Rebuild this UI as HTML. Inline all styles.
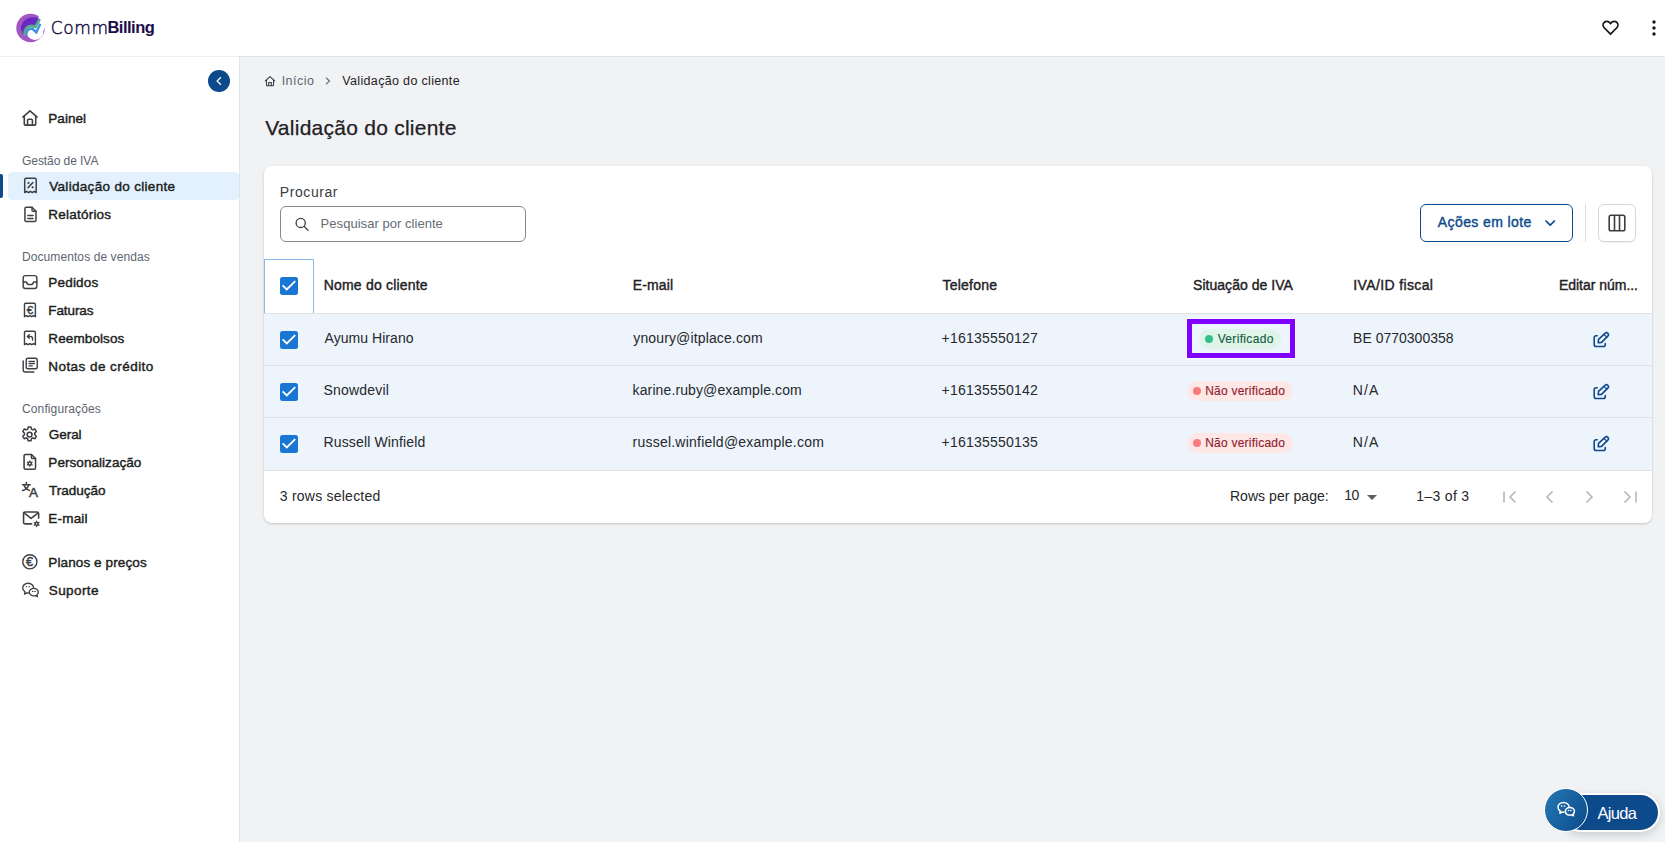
<!DOCTYPE html>
<html lang="pt">
<head>
<meta charset="utf-8">
<title>Validação do cliente</title>
<style>
*{box-sizing:border-box;margin:0;padding:0}
html,body{width:1665px;height:842px;overflow:hidden;background:#f1f2f4;font-family:"Liberation Sans",sans-serif;color:#1f2124}
.abs{position:absolute;white-space:nowrap;line-height:1}
#header{position:absolute;left:0;top:0;width:1665px;height:57px;background:#fff;border-bottom:1px solid #e1e3e5}
#side{position:absolute;left:0;top:57px;width:240px;height:785px;background:#fff;border-right:1px solid #e1e3e5}
.nav{position:absolute;font-size:13.5px;font-weight:normal;-webkit-text-stroke:.42px #1c1e21;color:#1c1e21;white-space:nowrap;line-height:16px}
.sec{position:absolute;font-size:12px;color:#5d6470;white-space:nowrap;line-height:14px}
.ico{position:absolute;left:21px;width:18px;height:18px;fill:none;stroke:#3c3f44;stroke-width:1.42;stroke-linecap:round;stroke-linejoin:round}
#card{position:absolute;left:264px;top:166px;width:1388px;height:357px;background:#fff;border-radius:8px;box-shadow:0 1px 3px rgba(0,0,0,.12),0 1px 2px rgba(0,0,0,.08)}
.row{position:absolute;left:0;width:1388px;background:#edf4fc;border-top:1px solid #dfe1e4}
.th{position:absolute;top:111.2px;font-size:14px;-webkit-text-stroke:.4px #1f2124;color:#1f2124;white-space:nowrap;line-height:16px}
.td{position:absolute;font-size:14px;color:#26282b;white-space:nowrap;line-height:16px;letter-spacing:.15px}
.cb{position:absolute;left:16px;width:18px;height:18px;background:#1976d2;border-radius:2.5px}
.cb svg{position:absolute;left:0;top:0;width:18px;height:18px;fill:none;stroke:#fff;stroke-width:1.9}
.chip{position:absolute;height:20px;border-radius:10px;font-size:12px;line-height:20px;white-space:nowrap}
.chip i{position:absolute;top:6px;width:8px;height:8px;border-radius:50%}
.edit{position:absolute;left:1328px;width:18px;height:18px;fill:none;stroke:#0d4a8b;stroke-width:1.6;stroke-linecap:round;stroke-linejoin:round}
.pg{position:absolute;top:321px;width:20px;height:20px;fill:none;stroke:#b4b7bb;stroke-width:1.6}
</style>
</head>
<body>
<div id="header">
  <svg class="abs" style="left:10px;top:8px" width="42" height="40" viewBox="0 0 42 40">
    <circle cx="20.500" cy="20" r="14.200" fill="#a256c2"/>
    <circle cx="24.900" cy="23.500" r="8.500" fill="#fff"/>
    <path d="M28.900 8.200L40 2V19.400H34.900L33.300 23 25 23.500 26 14z" fill="#fff"/>
    <path d="M28 9.500Q15 7.500 11.200 17.500 10 22.500 13.800 26.500L14.500 21.500Q16 17.300 22 17L24.800 17.600 28.800 11z" fill="#6a28c2"/>
    <path d="M16.300 27.600Q15.800 20.800 22.300 20.600L26.300 24.400 30.300 15.800" fill="none" stroke="#3d93dc" stroke-width="2.500" stroke-linejoin="miter"/>
    <path d="M14.700 26.600Q13.900 18.400 22 17.900L25.400 18.900 29.300 11.900" fill="none" stroke="#56a88c" stroke-width="2.700" stroke-linejoin="miter" stroke-linecap="round"/>
  </svg>
  <div class="abs" id="logo1" style="left:50.8px;top:19.6px;font-size:17px;color:#1b1145;-webkit-text-stroke:.45px #1b1145;font-family:'DejaVu Sans Light','DejaVu Sans','Liberation Sans',sans-serif;font-weight:200;letter-spacing:0.6px">Comm</div>
  <div class="abs" id="logo2" style="left:107.38px;top:19.3px;font-size:16.500px;color:#1a0d4a;font-weight:bold;letter-spacing:-0.493px">Billing</div>
  <svg class="abs" style="left:1600.5px;top:18.4px" width="19" height="19" viewBox="0 0 24 24" fill="none" stroke="#17181a" stroke-width="2.2" stroke-linejoin="round"><path d="M12 20.500l-8-8.200a4.800 4.800 0 0 1 0-6.700 4.600 4.600 0 0 1 6.600 0L12 7l1.400-1.400a4.600 4.600 0 0 1 6.600 0 4.800 4.800 0 0 1 0 6.700z"/></svg>
  <svg class="abs" style="left:1651px;top:19px" width="6" height="18" viewBox="0 0 6 18" fill="#17181a"><circle cx="3" cy="3" r="1.700"/><circle cx="3" cy="9" r="1.700"/><circle cx="3" cy="15" r="1.700"/></svg>
</div>

<div id="side"></div>
<div class="abs" style="left:0;top:56px;width:239px;height:1px;background:#eeeff1"></div>
<div id="sidecontent">
  <div class="abs" style="left:208px;top:70px;width:22px;height:22px;border-radius:50%;background:#0d4a8b"></div>
  <svg class="abs" style="left:214.4px;top:75px" width="10" height="12" viewBox="0 0 10 12" fill="none" stroke="#fff" stroke-width="1.250"><path d="M6.900 2.200L3.100 6l3.800 3.800"/></svg>

  <div class="abs" style="left:0;top:174px;width:3px;height:24px;background:#0d4a8b;border-radius:0 2px 2px 0"></div>
  <div class="abs" style="left:8px;top:172px;width:231px;height:28px;background:#e2f1fd;border-radius:4px"></div>

  <svg class="ico" style="left:19.12px;top:107.08px;width:21.97px;height:21.97px" viewBox="0 0 20 20"><path d="M3.500 9.200L10 3.500l6.500 5.700"/><path d="M4.800 8.300v7.200q0 1 1 1h8.400q1 0 1-1V8.300"/><path d="M7.800 16.300v-4.200q0-1 1-1h2.400q1 0 1 1v4.200"/></svg>
  <div class="nav" id="n1" style="left:48.33px;top:110.6px;letter-spacing:0.037px">Painel</div>
  <svg class="ico" style="left:19.57px;top:175.44px;width:20.92px;height:20.92px" viewBox="0 0 20 20"><path d="M4.500 16.800V4.500q0-1.300 1.300-1.300h8.400q1.300 0 1.300 1.300v12.300l-1.830-1.200-1.830 1.200-1.840-1.200-1.830 1.200-1.830-1.200L4.500 16.800z"/><path d="M12.300 7.200l-4.600 5"/><circle cx="8" cy="7.600" r=".7" fill="#3a3d42" stroke-width=".6"/><circle cx="12" cy="11.800" r=".7" fill="#3a3d42" stroke-width=".6"/></svg>
  <div class="nav" id="n2" style="left:49.18px;top:178.6px;letter-spacing:0.321px">Validação do cliente</div>
  <svg class="ico" style="left:19.57px;top:203.94px;width:20.92px;height:20.92px" viewBox="0 0 20 20"><path d="M11.500 3.200H6q-1.300 0-1.300 1.300v11q0 1.300 1.300 1.300h8q1.300 0 1.300-1.300V7z"/><path d="M11.500 3.200V6q0 1 1 1h2.800"/><path d="M7.500 11h5M7.500 13.800h5"/></svg>
  <div class="nav" id="n3" style="left:48.33px;top:206.6px;letter-spacing:0.221px">Relatórios</div>
  <svg class="ico" style="left:19.96px;top:271.86px;width:20.07px;height:20.07px" viewBox="0 0 20 20"><rect x="3.200" y="3.600" width="13.600" height="12.800" rx="2.200"/><path d="M3.200 10h3.300q.5 2.600 3.500 2.600t3.500-2.600h3.300"/></svg>
  <div class="nav" id="n4" style="left:48.33px;top:274.6px;letter-spacing:0.191px">Pedidos</div>
  <svg class="ico" style="left:20.26px;top:299.56px;width:19.88px;height:19.88px" viewBox="0 0 20 20"><path d="M4.500 16.800V4.500q0-1.300 1.300-1.300h8.400q1.300 0 1.300 1.300v12.300l-1.830-1.200-1.830 1.200-1.840-1.200-1.830 1.200-1.830-1.200L4.500 16.800z"/><text x="10.100" y="13.900" font-size="11.500" text-anchor="middle" fill="#3a3d42" stroke="#3a3d42" stroke-width=".45" font-family="Liberation Sans,sans-serif">€</text></svg>
  <div class="nav" id="n5" style="left:48.33px;top:302.6px;letter-spacing:-0.106px">Faturas</div>
  <svg class="ico" style="left:20.26px;top:327.56px;width:19.88px;height:19.88px" viewBox="0 0 20 20"><path d="M4.500 16.800V4.500q0-1.300 1.300-1.300h8.400q1.300 0 1.300 1.300v12.300l-1.830-1.200-1.830 1.200-1.840-1.200-1.830 1.200-1.830-1.200L4.500 16.800z"/><path d="M7.600 8.600h3q2 0 2 2v1.600" stroke-width="1.400"/><path d="M9.300 6.800L7.500 8.600l1.800 1.800" stroke-width="1.400"/></svg>
  <div class="nav" id="n6" style="left:48.33px;top:330.6px;letter-spacing:0.106px">Reembolsos</div>
  <svg class="ico" style="left:19.51px;top:354.83px;width:20.06px;height:20.06px" viewBox="0 0 20 20"><rect x="6.200" y="3.200" width="11" height="10.600" rx="1.800"/><path d="M3.200 6v9q0 2 2 2h8.600"/><path d="M9 6.500h5.400M9 8.700h5.400M9 10.900h3.200" stroke-width="1.300"/></svg>
  <div class="nav" id="n7" style="left:48.28px;top:358.6px;letter-spacing:0.449px">Notas de crédito</div>
  <svg class="ico" style="left:19.46px;top:424.33px;width:21.17px;height:21.17px" viewBox="0 0 20 20"><circle cx="10" cy="10" r="2.300"/><path d="M8.700 2.800h2.600l.5 2 1.300.7 2-.7 1.300 2.300-1.500 1.500v1.500l1.500 1.500-1.300 2.300-2-.7-1.300.7-.5 2H8.700l-.5-2-1.300-.7-2 .7-1.300-2.300 1.500-1.500V8.600L3.600 7.100l1.300-2.300 2 .7 1.300-.7z"/></svg>
  <div class="nav" id="n8" style="left:48.83px;top:426.6px;letter-spacing:-0.055px">Geral</div>
  <svg class="ico" style="left:19.29px;top:451.08px;width:21.63px;height:21.63px" viewBox="0 0 20 20"><path d="M11.500 3.200H6q-1.300 0-1.300 1.300v11q0 1.300 1.300 1.300h8q1.300 0 1.300-1.300V7z"/><path d="M11.500 3.200V6q0 1 1 1h2.800"/><circle cx="10" cy="11.600" r="1.500" stroke-width="1.300"/><path d="M10 9.200v.9M10 13.100v.9M7.900 10.400l.8.500M11.300 12.300l.8.500M7.900 12.800l.8-.5M11.300 10.900l.8-.5" stroke-width="1.200"/></svg>
  <div class="nav" id="n9" style="left:48.33px;top:454.6px;letter-spacing:0.057px">Personalização</div>
  <svg class="ico" style="left:19.22px;top:479.16px;width:21.66px;height:21.66px" viewBox="0 0 20 20"><path d="M3.300 5.400h7M6.800 3.300v2.100M4.700 5.400q.6 3.400 4.900 5.100M8.900 5.400q-.8 3.800-5.500 5.300" stroke-width="1.400"/><text x="13.500" y="16.900" font-size="12.500" text-anchor="middle" fill="#3a3d42" stroke="#3a3d42" stroke-width=".45" font-family="Liberation Sans,sans-serif">A</text></svg>
  <div class="nav" id="n10" style="left:49.1px;top:482.6px;letter-spacing:-0.022px">Tradução</div>
  <svg class="ico" style="left:19.55px;top:506.89px;width:22.21px;height:22.21px" viewBox="0 0 20 20"><path d="M10.500 15.200H4.700q-1.500 0-1.500-1.500V6q0-1.500 1.500-1.500h10.600q1.500 0 1.500 1.500v4"/><path d="M3.600 5.200L10 10.200l6.400-5"/><circle cx="15" cy="15.200" r="1.300" stroke-width="1.200"/><path d="M15 12.800v1M15 16.600v1M12.900 14l.9.500M16.200 15.900l.9.500M12.900 16.400l.9-.5M16.200 14.500l.9-.5" stroke-width="1.200"/></svg>
  <div class="nav" id="n11" style="left:48.33px;top:510.6px;letter-spacing:0.19px">E-mail</div>
  <svg class="ico" style="left:20.21px;top:551.99px;width:19.68px;height:19.68px" viewBox="0 0 20 20"><circle cx="10" cy="10" r="7.200"/><text x="9.800" y="14.600" font-size="13" text-anchor="middle" fill="#3a3d42" stroke="#3a3d42" stroke-width=".45" font-family="Liberation Sans,sans-serif">€</text></svg>
  <div class="nav" id="n12" style="left:48.33px;top:554.6px;letter-spacing:0.107px">Planos e preços</div>
  <svg class="ico" style="left:19.89px;top:579.46px;width:20.83px;height:20.83px" viewBox="0 0 20 20"><path d="M8.200 13.400q-.7.100-1.600-.1l-2.300 1.200.5-2.100Q2.600 11 2.600 8.700q0-2 1.500-3.300t3.700-1.300q2.200 0 3.700 1.300 1.300 1.100 1.500 2.700" stroke-width="1.300"/><path d="M17.600 12.600q0 1.600-1.300 2.600l.4 1.700-1.900-.9q-.8.200-1.500.2-1.800 0-3.100-1t-1.300-2.600 1.300-2.600 3.100-1 3.100 1 1.200 2.600z" stroke-width="1.300"/><path d="M6.200 7.300h.2M8.800 7.300h.2M12.100 11.900h.2M14.300 11.900h.2" stroke-width="1.300"/></svg>
  <div class="nav" id="n13" style="left:48.76px;top:582.6px;letter-spacing:0.42px">Suporte</div>
  <div class="sec" id="s1" style="left:22.02px;top:154.0px;letter-spacing:-0.062px">Gestão de IVA</div>
  <div class="sec" id="s2" style="left:21.98px;top:250.0px;letter-spacing:0.088px">Documentos de vendas</div>
  <div class="sec" id="s3" style="left:22.02px;top:402.2px;letter-spacing:0.119px">Configurações</div>
</div>

<div id="main">
  <svg class="abs" style="left:264px;top:75px" width="12" height="12" viewBox="0 0 12 12" fill="none" stroke="#3a3d42" stroke-width="1.100" stroke-linejoin="round" stroke-linecap="round"><path d="M1.300 5.800L6 1.600l4.700 4.200"/><path d="M2.500 5v5.200q0 .5.500.5h6q.5 0 .5-.5V5"/><path d="M4.700 10.600V7.500h2.600v3.100"/></svg>
  <svg class="abs" style="left:324px;top:76px" width="8" height="10" viewBox="0 0 8 10" fill="none" stroke="#6b7078" stroke-width="1.200"><path d="M2 1.800L5.500 5 2 8.200"/></svg>
  <div class="abs" id="bc1" style="left:281.66px;top:75.2px;font-size:12.5px;color:#5d6470;letter-spacing:0.466px">Início</div>
  <div class="abs" id="bc2" style="left:342.34px;top:75.2px;font-size:12.5px;color:#1f2124;letter-spacing:0.334px">Validação do cliente</div>
  <div class="abs" id="title" style="left:265.18px;top:116.6px;font-size:21px;color:#1f2124;-webkit-text-stroke:.25px #1f2124;letter-spacing:0.253px">Validação do cliente</div>
</div>

<div id="card">
  <div class="abs" id="proc" style="left:15.8px;top:19px;font-size:14px;color:#3a3d42;letter-spacing:0.575px">Procurar</div>
  <div class="abs" style="left:16px;top:40px;width:246px;height:36px;border:1px solid #85888c;border-radius:6px"></div>
  <div class="abs" id="ph" style="left:56.61px;top:51px;font-size:13px;color:#666b73;letter-spacing:0.04px">Pesquisar por cliente</div>

  <div class="abs" style="left:1156px;top:38px;width:153px;height:38px;border:1px solid #0d4a8b;border-radius:6px"></div>
  <div class="abs" id="acoes" style="left:1173.86px;top:49px;font-size:14px;-webkit-text-stroke:.4px #0d4a8b;color:#0d4a8b;letter-spacing:0.391px">Ações em lote</div>
  <div class="abs" style="left:1321px;top:38px;width:1px;height:38px;background:#dcdee1"></div>
  <div class="abs" style="left:1334px;top:38px;width:38px;height:38px;border:1px solid #d5d7da;border-radius:6px;box-shadow:0 1px 0 rgba(0,0,0,.06)"></div>

  <div class="abs" style="left:0;top:93px;width:50px;height:54px;border:1px solid #8db9ea;border-bottom:none"></div>

  <div class="th" id="h1" style="left:59.73px;letter-spacing:0.198px">Nome do cliente</div>
  <div class="th" id="h2" style="left:368.67px;letter-spacing:0.152px">E-mail</div>
  <div class="th" id="h3" style="left:678.59px;letter-spacing:0.208px">Telefone</div>
  <div class="th" id="h4" style="left:929.0px;letter-spacing:0.042px">Situação de IVA</div>
  <div class="th" id="h5" style="left:1089.26px;letter-spacing:0.372px">IVA/ID fiscal</div>
  <div class="th" id="h6" style="left:1294.96px;letter-spacing:-0.027px">Editar núm...</div>

  <div class="row" style="top:147px;height:52px"></div>
  <div class="row" style="top:199px;height:52px"></div>
  <div class="row" style="top:251px;height:54px;border-bottom:1px solid #dfe1e4"></div>

  <div class="td" id="a1" style="left:60.5px;top:164px;letter-spacing:0.052px">Ayumu Hirano</div>
  <div class="td" id="a2" style="left:369.3px;top:164px;letter-spacing:0.133px">ynoury@itplace.com</div>
  <div class="td" id="a3" style="left:677.59px;top:164px;letter-spacing:0.209px">+16135550127</div>
  <div class="td" id="a5" style="left:1089.04px;top:164px;letter-spacing:0.011px">BE 0770300358</div>

  <div class="td" id="b1" style="left:59.6px;top:216px;letter-spacing:0.189px">Snowdevil</div>
  <div class="td" id="b2" style="left:368.62px;top:216px;letter-spacing:0.11px">karine.ruby@example.com</div>
  <div class="td" id="b3" style="left:677.59px;top:216px;letter-spacing:0.209px">+16135550142</div>
  <div class="td" id="b5" style="left:1088.85px;top:216px;letter-spacing:1.123px">N/A</div>

  <div class="td" id="c1" style="left:59.51px;top:268px;letter-spacing:0.148px">Russell Winfield</div>
  <div class="td" id="c2" style="left:368.53px;top:268px;letter-spacing:0.23px">russel.winfield@example.com</div>
  <div class="td" id="c3" style="left:677.59px;top:268px;letter-spacing:0.206px">+16135550135</div>
  <div class="td" id="c5" style="left:1088.85px;top:268px;letter-spacing:1.123px">N/A</div>

  <div class="abs" id="sel" style="left:15.82px;top:323px;font-size:14px;color:#26282b;letter-spacing:0.229px">3 rows selected</div>
  <div class="abs" id="rpp" style="left:965.88px;top:323px;font-size:14px;color:#26282b;letter-spacing:0.061px">Rows per page:</div>
  <div class="abs" id="ten" style="left:1080.34px;top:322px;font-size:14px;color:#26282b;letter-spacing:-0.494px">10</div>
  <div class="abs" id="of" style="left:1152.36px;top:323px;font-size:14px;color:#26282b;letter-spacing:0.302px">1–3 of 3</div>

  <svg class="abs" style="left:30px;top:50px" width="16" height="16" viewBox="0 0 16 16" fill="none" stroke="#3a3d42" stroke-width="1.300" stroke-linecap="round"><circle cx="6.700" cy="6.900" r="4.600"/><path d="M10.200 10.400L14 14.200"/></svg>
  <svg class="abs" style="left:1279px;top:52px" width="14" height="10" viewBox="0 0 14 10" fill="none" stroke="#0d4a8b" stroke-width="1.700" stroke-linecap="round" stroke-linejoin="round"><path d="M3 3l4.200 4.200L11.400 3"/></svg>
  <svg class="abs" style="left:1343px;top:47px" width="20" height="20" viewBox="0 0 20 20" fill="none" stroke="#3a3d42" stroke-width="1.600" stroke-linejoin="round"><rect x="2.200" y="2.200" width="15.600" height="15.600" rx="1.800"/><path d="M7.500 2.200v15.600M12.500 2.200v15.600"/></svg>

  <div class="cb" style="top:111px"><svg viewBox="0 0 18 18"><path d="M2.600 8.300l4.200 4.200 8.400-8.400"/></svg></div>
  <div class="cb" style="top:165px"><svg viewBox="0 0 18 18"><path d="M2.600 8.300l4.200 4.200 8.400-8.400"/></svg></div>
  <div class="cb" style="top:217px"><svg viewBox="0 0 18 18"><path d="M2.600 8.300l4.200 4.200 8.400-8.400"/></svg></div>
  <div class="cb" style="top:269px"><svg viewBox="0 0 18 18"><path d="M2.600 8.300l4.200 4.200 8.400-8.400"/></svg></div>

  <div class="abs" style="left:923px;top:153px;width:108px;height:39px;border:5px solid #8000ff;box-shadow:0 0 0 1px rgba(255,255,255,.7)"></div>
  <div class="chip" style="left:935px;top:163px;width:82px;background:#dff5ea"><i style="left:6px;background:#34c08a"></i></div>
  <div class="abs" id="k1" style="left:953.64px;top:167px;font-size:12px;color:#155c44;-webkit-text-stroke:.15px #155c44;letter-spacing:0.338px">Verificado</div>
  <div class="chip" style="left:923px;top:215px;width:106px;background:#fde8e6"><i style="left:6px;background:#f87a7e"></i></div>
  <div class="abs" id="k2" style="left:941.18px;top:219px;font-size:12px;color:#941c30;-webkit-text-stroke:.15px #941c30;letter-spacing:0.23px">Não verificado</div>
  <div class="chip" style="left:923px;top:267px;width:106px;background:#fde8e6"><i style="left:6px;background:#f87a7e"></i></div>
  <div class="abs" id="k3" style="left:941.18px;top:271px;font-size:12px;color:#941c30;-webkit-text-stroke:.15px #941c30;letter-spacing:0.23px">Não verificado</div>

  <svg class="edit" style="top:165px" viewBox="0 0 18 18"><path d="M5.200 4.800H4.200Q2.200 4.800 2.200 6.800v6.600q0 2.100 2.100 2.100h6.900q2.100 0 2.100-2.100v-.8"/><path d="M13 2.300A1.950 1.950 0 0 1 15.800 5.100L9.500 11.400l-3.300.3.300-3.300z"/><path d="M12 3.400l2.700 2.700" stroke-width="1.300"/></svg>
  <svg class="edit" style="top:217px" viewBox="0 0 18 18"><path d="M5.200 4.800H4.200Q2.200 4.800 2.200 6.800v6.600q0 2.100 2.100 2.100h6.900q2.100 0 2.100-2.100v-.8"/><path d="M13 2.300A1.950 1.950 0 0 1 15.800 5.100L9.500 11.400l-3.300.3.300-3.300z"/><path d="M12 3.400l2.700 2.700" stroke-width="1.300"/></svg>
  <svg class="edit" style="top:269px" viewBox="0 0 18 18"><path d="M5.200 4.800H4.200Q2.200 4.800 2.200 6.800v6.600q0 2.100 2.100 2.100h6.900q2.100 0 2.100-2.100v-.8"/><path d="M13 2.300A1.950 1.950 0 0 1 15.800 5.100L9.500 11.400l-3.300.3.300-3.300z"/><path d="M12 3.400l2.700 2.700" stroke-width="1.300"/></svg>

  <svg class="abs" style="left:1103px;top:329px" width="10" height="5" viewBox="0 0 10 5"><path d="M0 0h10L5 5z" fill="#5a5d62"/></svg>
  <svg class="pg" style="left:1236px" viewBox="0 0 20 20"><path d="M4 4.500v11M15.500 4.500L10 10l5.500 5.500"/></svg>
  <svg class="pg" style="left:1275px" viewBox="0 0 20 20"><path d="M13.500 4.500L8 10l5.500 5.500"/></svg>
  <svg class="pg" style="left:1316px" viewBox="0 0 20 20"><path d="M6.500 4.500L12 10l-5.500 5.500"/></svg>
  <svg class="pg" style="left:1356px" viewBox="0 0 20 20"><path d="M16 4.500v11M4.500 4.500L10 10l-5.500 5.500"/></svg>
</div>

<div id="help">
  <div class="abs" style="left:1561px;top:792.5px;width:98.8px;height:39.8px;border-radius:20px;background:#0d4a8b;border:2px solid #fff;box-shadow:0 3px 8px rgba(0,0,0,.16)"></div>
  <div class="abs" style="left:1543.5px;top:787.5px;width:44px;height:44px;border-radius:50%;background:linear-gradient(120deg,#2478b4,#0d4a8b);border:1.300px solid #fff"></div>
  <svg class="abs" style="left:1554.5px;top:800px" width="23.100" height="21" viewBox="0 0 20 18" fill="none" stroke="#fff" stroke-width="1.300" stroke-linecap="round" stroke-linejoin="round"><path d="M7.800 10.400q-.7.100-1.500-.1L4.200 11.400l.4-1.900Q2.600 8.200 2.600 6.200q0-1.800 1.400-3t3.400-1.200q2 0 3.400 1.200 1.200 1 1.400 2.500"/><path d="M16.800 9.700q0 1.500-1.200 2.400l.4 1.500-1.700-.8q-.7.200-1.400.2-1.700 0-2.800-.9T9 9.700t1.100-2.400 2.800-.9 2.800.9 1.100 2.400z"/><path d="M5.700 5h.2M8.100 5h.2M11.600 9h.2M13.600 9h.2"/></svg>
  <div class="abs" id="ajuda" style="left:1597.53px;top:805px;font-size:16.500px;color:#fff;letter-spacing:-0.672px">Ajuda</div>
</div>
</body>
</html>
